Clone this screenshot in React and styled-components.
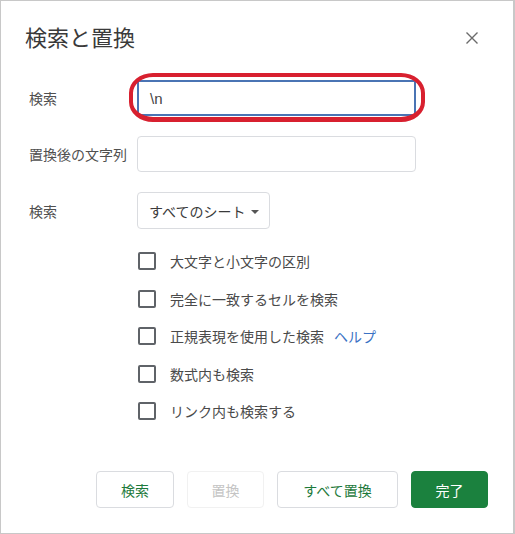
import React from 'react'
import styled, { createGlobalStyle } from 'styled-components'

const GlobalStyle = createGlobalStyle`
    html, body {
        margin: 0;
        padding: 0;
        background: #ffffff;
    }
    body {
        font-family: "Noto Sans CJK JP", "Noto Sans", sans-serif;
    }
`

const Dialog = styled.div`
    box-sizing: border-box;
    width: 515px;
    height: 534px;
    border: 1px solid #c8c8c8;
    border-right-width: 2px;
    background: #fff;
    display: flex;
    flex-direction: column;
    padding: 0 0 25px 28px;
`

const Header = styled.div`
    display: flex;
    align-items: center;
    justify-content: space-between;
    height: 48px;
    margin: 11px 0 0 -4px;
`

const Title = styled.h1`
    margin: 0;
    font-size: 22px;
    font-weight: 400;
    color: #3a3a3a;
`

const CloseButton = styled.button`
    border: none;
    background: none;
    padding: 0;
    width: 14px;
    height: 14px;
    margin: 4px 34px 0 0;
    cursor: pointer;
    display: flex;
`

const Form = styled.div`
    display: grid;
    grid-template-columns: 108px 279px;
    row-gap: 20px;
    align-items: center;
    margin-top: 20px;
`

const Label = styled.label`
    font-size: 14px;
    color: #505050;
`

const FieldWrap = styled.div`
    position: relative;
    display: flex;
`

const TextInput = styled.div`
    box-sizing: border-box;
    width: 100%;
    height: 36px;
    border: ${({ $focused }) => ($focused ? '2px solid #4a74b4' : '1px solid #dadce0')};
    border-radius: ${({ $focused }) => ($focused ? '1px' : '4px')};
    padding: 0 ${({ $focused }) => ($focused ? '11px' : '12px')};
    display: flex;
    align-items: center;
    font-size: 15px;
    color: #444;
    font-family: "Liberation Sans", Arial, sans-serif;
`

const Annotation = styled.div`
    position: absolute;
    left: -8px;
    right: -9px;
    top: -7px;
    bottom: -6px;
    border: 4px solid #d8202f;
    border-bottom-width: 5px;
    border-radius: 24px / 20px;
    pointer-events: none;
`

const Select = styled.div`
    box-sizing: border-box;
    justify-self: start;
    height: 37px;
    padding: 0 10px 0 11px;
    border: 1px solid #dadce0;
    border-radius: 4px;
    display: flex;
    align-items: center;
    gap: 6px;
    font-size: 14px;
    color: #3a3a3a;
`

const Caret = styled.span`
    width: 0;
    height: 0;
    border-left: 4px solid transparent;
    border-right: 4px solid transparent;
    border-top: 4px solid #555;
    margin-top: 2px;
`

const Options = styled.div`
    display: flex;
    flex-direction: column;
    gap: 19.6px;
    margin: 23px 0 0 109px;
`

const Option = styled.label`
    display: flex;
    align-items: center;
    gap: 14px;
    height: 18px;
    font-size: 14px;
    color: #4a4a4a;
`

const Box = styled.span`
    box-sizing: border-box;
    width: 18px;
    height: 18px;
    border: 2px solid #5f6368;
    border-radius: 2px;
    flex-shrink: 0;
`

const HelpLink = styled.a`
    color: #3b72c4;
    text-decoration: none;
    margin-left: 10px;
`

const Footer = styled.div`
    margin-top: auto;
    display: flex;
    gap: 13px;
    padding-left: 67px;
`

const Button = styled.button`
    box-sizing: border-box;
    height: 37px;
    width: ${({ $w }) => $w}px;
    border-radius: 4px;
    font-family: inherit;
    font-size: 14px;
    cursor: pointer;
    border: 1px solid ${({ $primary, disabled }) => ($primary ? '#1b813e' : disabled ? '#f1f1f1' : '#dadce0')};
    background: ${({ $primary }) => ($primary ? '#1b813e' : '#fff')};
    color: ${({ $primary, disabled }) => ($primary ? '#fff' : disabled ? '#c4c4c4' : '#1e7a3c')};
`

const App = () => {
    const options = [
        '大文字と小文字の区別',
        '完全に一致するセルを検索',
        '正規表現を使用した検索',
        '数式内も検索',
        'リンク内も検索する',
    ]

    return (
        <>
            <GlobalStyle />
            <Dialog>
                <Header>
                    <Title>検索と置換</Title>
                    <CloseButton aria-label="閉じる">
                        <svg width="14" height="14" viewBox="0 0 14 14">
                            <path d="M1.5 1.5 L12.5 12.5 M12.5 1.5 L1.5 12.5" stroke="#6b6b6b" strokeWidth="1.4" />
                        </svg>
                    </CloseButton>
                </Header>

                <Form>
                    <Label>検索</Label>
                    <FieldWrap>
                        <TextInput $focused>\n</TextInput>
                        <Annotation />
                    </FieldWrap>

                    <Label>置換後の文字列</Label>
                    <FieldWrap>
                        <TextInput />
                    </FieldWrap>

                    <Label>検索</Label>
                    <Select>
                        すべてのシート
                        <Caret />
                    </Select>
                </Form>

                <Options>
                    {options.map((text, i) => (
                        <Option key={i}>
                            <Box />
                            <span>
                                {text}
                                {i === 2 && <HelpLink href="#">ヘルプ</HelpLink>}
                            </span>
                        </Option>
                    ))}
                </Options>

                <Footer>
                    <Button $w={78}>検索</Button>
                    <Button $w={77} disabled>置換</Button>
                    <Button $w={121}>すべて置換</Button>
                    <Button $w={77} $primary>完了</Button>
                </Footer>
            </Dialog>
        </>
    )
}

export default App
